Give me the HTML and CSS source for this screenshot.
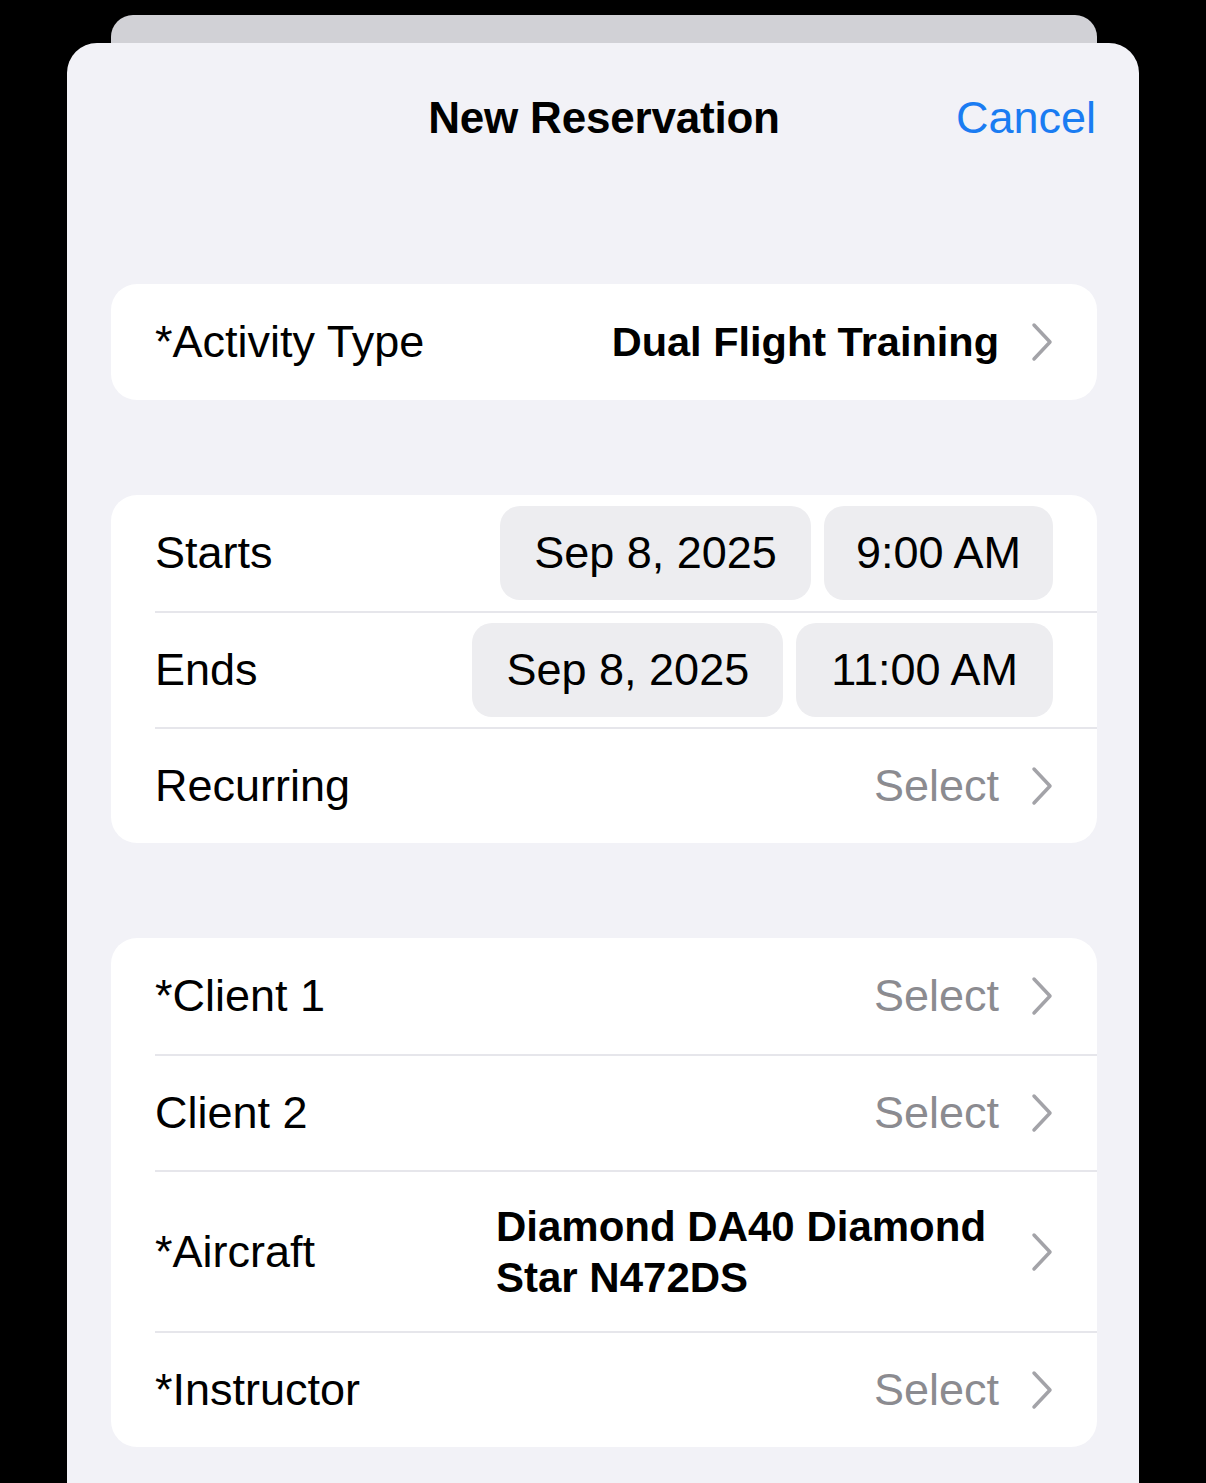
FILE: index.html
```html
<!DOCTYPE html>
<html lang="en">
<head>
<meta charset="UTF-8" />
<meta name="viewport" content="width=device-width, initial-scale=1" />
<title>New Reservation</title>
<link rel="stylesheet" href="styles.css">
</head>
<body>
<div class="screen">
  <!-- card of the screen underneath the modal -->
  <div class="sheet-behind"></div>

  <div class="sheet">
    <header class="nav">
      <span></span>
      <h1 class="nav-title">New Reservation</h1>
      <a class="nav-cancel" href="#">Cancel</a>
    </header>

    <!-- Activity -->
    <section class="group">
      <div class="row">
        <span class="label">*Activity Type</span>
        <span class="value strong">Dual Flight Training</span>
        <svg class="chevron" viewBox="0 0 22 40"><polyline points="3,3 19,20 3,37" /></svg>
      </div>
    </section>

    <!-- Dates -->
    <section class="group">
      <div class="row">
        <span class="label">Starts</span>
        <div class="pills">
          <span class="pill date">Sep 8, 2025</span>
          <span class="pill time">9:00 AM</span>
        </div>
      </div>
      <div class="row">
        <span class="label">Ends</span>
        <div class="pills">
          <span class="pill date">Sep 8, 2025</span>
          <span class="pill time wide">11:00 AM</span>
        </div>
      </div>
      <div class="row">
        <span class="label">Recurring</span>
        <span class="value muted">Select</span>
        <svg class="chevron" viewBox="0 0 22 40"><polyline points="3,3 19,20 3,37" /></svg>
      </div>
    </section>

    <!-- People and aircraft -->
    <section class="group">
      <div class="row">
        <span class="label">*Client 1</span>
        <span class="value muted">Select</span>
        <svg class="chevron" viewBox="0 0 22 40"><polyline points="3,3 19,20 3,37" /></svg>
      </div>
      <div class="row">
        <span class="label">Client 2</span>
        <span class="value muted">Select</span>
        <svg class="chevron" viewBox="0 0 22 40"><polyline points="3,3 19,20 3,37" /></svg>
      </div>
      <div class="row tall">
        <span class="label">*Aircraft</span>
        <span class="value strong multi">Diamond DA40 Diamond Star N472DS</span>
        <svg class="chevron" viewBox="0 0 22 40"><polyline points="3,3 19,20 3,37" /></svg>
      </div>
      <div class="row">
        <span class="label">*Instructor</span>
        <span class="value muted">Select</span>
        <svg class="chevron" viewBox="0 0 22 40"><polyline points="3,3 19,20 3,37" /></svg>
      </div>
    </section>
  </div>
</div>
</body>
</html>
```

FILE: styles.css
```css
html, body {
  margin: 0;
  background: #000;
  height: 100%;
  overflow: hidden;
}
body {
  font-family: "Liberation Sans", Arial, sans-serif;
  color: #000;
}
.screen {
  padding-top: 15px;
}
/* Grey edge of the presenting screen */
.sheet-behind {
  height: 28px;
  margin: 0 109px 0 111px;
  background: #d1d1d6;
  border-radius: 22px 22px 0 0;
}
/* Modal sheet */
.sheet {
  height: 1440px;
  margin: 0 67px;
  padding: 0 42px 0 44px;
  background: #f2f2f7;
  border-radius: 30px 30px 0 0;
  overflow: hidden;
}

/* Navigation bar */
.nav {
  display: grid;
  grid-template-columns: 1fr auto 1fr;
  align-items: center;
  padding-top: 49px;
  margin-bottom: 140px;
  line-height: 52px;
}
.nav-title {
  margin: 0;
  font-size: 44px;
  font-weight: 700;
  letter-spacing: -0.2px;
}
.nav-cancel {
  justify-self: end;
  font-size: 45px;
  color: #1a7cf2;
  text-decoration: none;
  margin-right: 1px;
}

/* Grouped list */
.group {
  background: #fff;
  border-radius: 26px;
  margin-bottom: 95px;
  overflow: hidden;
}
.row {
  display: flex;
  align-items: center;
  box-sizing: border-box;
  height: 116px;
  margin-left: 44px;
  padding-right: 44px;
  font-size: 45px;
}
.row + .row {
  border-top: 2px solid #e6e6eb;
}
.row.tall {
  height: 161px;
}
.label {
  white-space: nowrap;
}
.value {
  margin-left: auto;
  margin-right: 32px;
}
.value.strong {
  font-weight: 700;
  font-size: 41.5px;
}
.value.muted {
  color: #8b8b90;
}
.value.multi {
  width: 503px;
  font-size: 42px;
  line-height: 51px;
}
.chevron {
  width: 22px;
  height: 40px;
  flex: none;
  fill: none;
  stroke: #a3a3a8;
  stroke-width: 3.5;
  stroke-linecap: round;
  stroke-linejoin: round;
}

/* Date and time buttons */
.pills {
  margin-left: auto;
  display: flex;
  gap: 13px;
}
.pill {
  height: 94px;
  line-height: 94px;
  padding: 0 32px;
  background: #ededf0;
  border-radius: 20px;
  white-space: nowrap;
}
.pill.date {
  padding: 0 34px;
}
.pill.time.wide {
  padding: 0 35px;
}
```
